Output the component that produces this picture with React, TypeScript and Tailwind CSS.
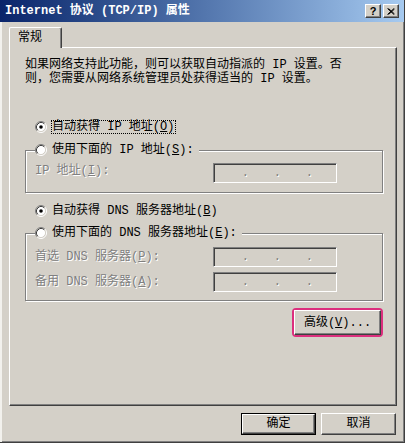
import React from "react";

const F = "font-['Liberation_Mono','Noto_Sans_CJK_SC',monospace] text-[12px]";

function Radio({ checked }: { checked?: boolean }) {
    return (
        <svg width="12" height="12" viewBox="0 0 12 12" className="shrink-0">
            <circle cx="6" cy="6" r="4.5" fill="#fff" />
            <path d="M9.89 2.11 A5.5 5.5 0 0 0 2.11 9.89" stroke="#808080" fill="none" />
            <path d="M2.11 9.89 A5.5 5.5 0 0 0 9.89 2.11" stroke="#fff" fill="none" />
            <path d="M9.18 2.82 A4.5 4.5 0 0 0 2.82 9.18" stroke="#404040" fill="none" />
            <path d="M2.82 9.18 A4.5 4.5 0 0 0 9.18 2.82" stroke="#d4d0c8" fill="none" />
            {checked && <circle cx="6" cy="6" r="1.8" fill="#000" />}
        </svg>
    );
}

function IpBox() {
    return (
        <div className="w-[124px] h-[20px] shrink-0 border border-t-[#808080] border-l-[#808080] border-r-white border-b-white shadow-[inset_1px_1px_0_#404040,inset_-1px_-1px_0_#d4d0c8] flex items-center pl-[3px] text-[#808080] [text-shadow:1px_1px_0_#fff]">
            {[0, 1, 2].map((i) => (
                <span key={i} className="w-[32px] text-right leading-[12px]">.</span>
            ))}
        </div>
    );
}

function Raised({ children, className }: { children: React.ReactNode; className: string }) {
    return (
        <div className={`border border-t-white border-l-white border-r-[#404040] border-b-[#404040] shadow-[inset_-1px_-1px_0_#808080] bg-[#d4d0c8] flex items-center justify-center ${className}`}>
            {children}
        </div>
    );
}

export default function App() {
    return (
        <div className={`${F} w-[405px] h-[443px] bg-[#d4d0c8] text-black flex flex-col border-r border-b border-r-[#404040] border-b-[#404040] shadow-[inset_-1px_-1px_0_#808080]`}>
            {/* Title bar */}
            <div className="h-[22px] shrink-0 flex items-center justify-between pl-[5px] pr-[5px] bg-gradient-to-r from-[#0a246a] to-[#a6caf0]">
                <span className="text-white font-bold leading-[14px] whitespace-pre">Internet 协议 (TCP/IP) 属性</span>
                <div className="flex gap-[2px]">
                    <Raised className="w-[16px] h-[14px]">
                        <span className="font-['Liberation_Sans'] font-bold text-[11px] leading-[11px]">?</span>
                    </Raised>
                    <Raised className="w-[16px] h-[14px]">
                        <svg width="8" height="7" viewBox="0 0 8 7">
                            <path d="M0.5 0.5 L7 6.5 M1.5 0.5 L7.5 6 M7 0.5 L0.5 6.5 M7.5 1 L1.5 6.5" stroke="#000" strokeWidth="1" />
                        </svg>
                    </Raised>
                </div>
            </div>

            {/* Body */}
            <div className="flex-1 flex flex-col border-l-2 border-l-[#f2f1ed] pl-[7px]">
                {/* Tab */}
                <div className="mt-[5px] flex">
                    <div className="relative z-10 -mb-[1px] w-[53px] h-[21px] bg-[#d4d0c8] border-l border-t border-r border-l-white border-t-white border-r-[#404040] rounded-t-[2px] shadow-[inset_-1px_0_0_#808080] pl-[8px] pt-[3px] leading-[14px]">
                        常规
                    </div>
                </div>

                {/* Panel */}
                <div className="w-[388px] h-[359px] shrink-0 border border-t-white border-l-white border-r-[#404040] border-b-[#404040] shadow-[inset_-1px_-1px_0_#808080] pt-[10px] flex flex-col">
                    <div className="pl-[15px] leading-[14px] whitespace-pre">
                        <div>如果网络支持此功能，则可以获取自动指派的 IP 设置。否</div>
                        <div>则，您需要从网络系统管理员处获得适当的 IP 设置。</div>
                    </div>

                    <div className="mt-[34px] pl-[25px] flex items-center h-[14px]">
                        <Radio checked />
                        <span className="ml-[4px] border border-dotted border-black leading-[12px] pr-[1px] whitespace-pre">
                            自动获得 IP 地址(<u>O</u>)
                        </span>
                    </div>

                    <fieldset className="mt-[9px] ml-[15px] w-[358px] border border-[#808080] shadow-[inset_1px_1px_0_#fff,1px_1px_0_#fff] pl-[9px] pt-[6px] pb-[9px]">
                        <legend className="flex items-center h-[14px] pr-[5px] bg-[#d4d0c8]">
                            <Radio />
                            <span className="ml-[5px] leading-[14px] whitespace-pre">使用下面的 IP 地址(<u>S</u>):</span>
                        </legend>
                        <div className="flex items-start">
                            <span className="w-[178px] pt-[1px] leading-[14px] whitespace-pre text-[#808080] [text-shadow:1px_1px_0_#fff]">IP 地址(<u>I</u>):</span>
                            <IpBox />
                        </div>
                    </fieldset>

                    <div className="mt-[11px] pl-[25px] flex items-center h-[14px]">
                        <Radio checked />
                        <span className="ml-[5px] leading-[14px] whitespace-pre">自动获得 DNS 服务器地址(<u>B</u>)</span>
                    </div>

                    <fieldset className="mt-[8px] ml-[15px] w-[358px] border border-[#808080] shadow-[inset_1px_1px_0_#fff,1px_1px_0_#fff] pl-[9px] pt-[7px] pb-[8px]">
                        <legend className="flex items-center h-[14px] pr-[5px] bg-[#d4d0c8]">
                            <Radio />
                            <span className="ml-[5px] leading-[14px] whitespace-pre">使用下面的 DNS 服务器地址(<u>E</u>):</span>
                        </legend>
                        <div className="flex flex-col gap-[5px]">
                            <div className="flex items-start">
                                <span className="w-[178px] pt-[3px] leading-[14px] whitespace-pre text-[#808080] [text-shadow:1px_1px_0_#fff]">首选 DNS 服务器(<u>P</u>):</span>
                                <IpBox />
                            </div>
                            <div className="flex items-start">
                                <span className="w-[178px] pt-[3px] leading-[14px] whitespace-pre text-[#808080] [text-shadow:1px_1px_0_#fff]">备用 DNS 服务器(<u>A</u>):</span>
                                <IpBox />
                            </div>
                        </div>
                    </fieldset>

                    <div className="mt-[7px] ml-[15px] w-[358px] flex justify-end">
                        <div className="border-2 border-[#dc2f7e] rounded-[4px]">
                            <Raised className="w-[87px] h-[25px]">
                                <span className="leading-[14px] whitespace-pre">高级(<u>V</u>)...</span>
                            </Raised>
                        </div>
                    </div>
                </div>

                {/* Bottom buttons */}
                <div className="mt-[7px] flex justify-end gap-[5px] pr-[8px]">
                    <div className="border border-black">
                        <Raised className="w-[73px] h-[20px]">
                            <span className="leading-[14px]">确定</span>
                        </Raised>
                    </div>
                    <Raised className="w-[75px] h-[22px]">
                        <span className="leading-[14px]">取消</span>
                    </Raised>
                </div>
            </div>
        </div>
    );
}
